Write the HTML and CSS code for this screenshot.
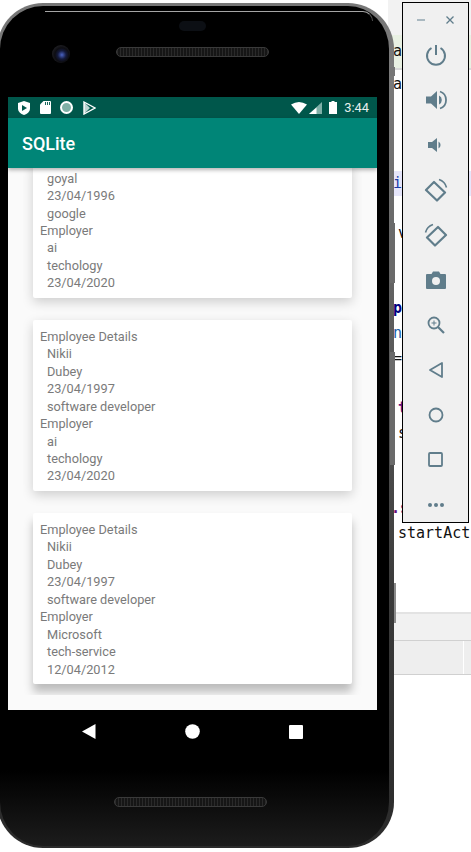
FILE: index.html
```html
<!DOCTYPE html>
<html lang="en">
<head>
  <meta charset="UTF-8" />
  <title>SQLite emulator</title>
  <link rel="stylesheet" href="styles.css">
</head>
<body>
  <div class="desktop">
    <div class="ide">
      <div class="ide-tab">a</div>
      <pre class="ide-code"><span class="l1">ay</span><span class="l2"><i>in</i></span><span class="l3 indent">v</span><span class="l4"><b>p:</b></span><span class="l5"><em>nC</em></span><span class="l6">=</span><span class="l7 indent"><u>t</u></span><span class="l8 indent">s</span><span class="l9"><u>.s</u></span><span class="l10 indent">startAct</span></pre>
      <div class="ide-bottom">
        <div class="ide-row"></div>
        <div class="ide-row ide-row-tabs"><div class="ide-cell"></div></div>
      </div>
    </div>

    <div class="phone">
      <div class="side-btn btn-a"></div>
      <div class="side-btn btn-b"></div>
      <div class="side-btn btn-c"></div>
      <div class="side-btn btn-d"></div>
      <div class="top-bezel">
        <div class="glare"></div>
        <div class="earpiece"></div>
        <div class="camera"></div>
        <div class="speaker"></div>
      </div>

      <div class="screen">
        <div class="status-bar">
          <div class="status-left">
            <svg width="12" height="14" viewBox="0 0 12 14"><path d="M6 0 12 2V7.500C12 10.500 9.500 13 6 14 2.500 13 0 10.500 0 7.500V2Z" fill="#fff"/><path d="M4 4 9 7 4 10Z" fill="#00574b"/></svg>
            <svg width="11" height="13" viewBox="0 0 11 13"><path d="M3.500 0H10Q11 0 11 1V12Q11 13 10 13H1Q0 13 0 12V3.500Z" fill="#fff"/><path d="M5.500 1V4M7.500 1V4M9.500 1V4" stroke="#00574b" stroke-width=".9"/></svg>
            <svg width="13" height="13" viewBox="0 0 13 13"><circle cx="6.500" cy="6.500" r="5.500" fill="#7fb0a6" stroke="#fff" stroke-width="2"/></svg>
            <svg width="13" height="14" viewBox="0 0 13 14"><path d="M1 1 12 7 1 13Z" fill="none" stroke="#fff" stroke-width="1.400"/><path d="M1 1 7 7 1 13Z" fill="#fff" fill-opacity=".75"/></svg>
          </div>
          <div class="status-right">
            <svg class="wifi" width="16" height="12" viewBox="0 0 16 12"><path d="M0 2.500Q8-2.500 16 2.500L8 12Z" fill="#fff"/></svg>
            <svg width="13" height="12" viewBox="0 0 13 12"><path d="M13 0V12H0Z" fill="#7fb0a8"/><path d="M7.500 5.500V12H0Z" fill="#fff"/></svg>
            <svg class="battery" width="8" height="13" viewBox="0 0 8 13"><path d="M2.500 0H5.500V1H8V13H0V1H2.500Z" fill="#fff"/></svg>
            <span class="clock">3:44</span>
          </div>
        </div>
        <div class="app-bar">SQLite</div>

        <div class="content">
          <div class="card-list">
            <div class="card">
              <p class="sub">goyal</p>
              <p class="sub">23/04/1996</p>
              <p class="sub">google</p>
              <p>Employer</p>
              <p class="sub">ai</p>
              <p class="sub">techology</p>
              <p class="sub">23/04/2020</p>
            </div>
            <div class="card">
              <p>Employee Details</p>
              <p class="sub">Nikii</p>
              <p class="sub">Dubey</p>
              <p class="sub">23/04/1997</p>
              <p class="sub">software developer</p>
              <p>Employer</p>
              <p class="sub">ai</p>
              <p class="sub">techology</p>
              <p class="sub">23/04/2020</p>
            </div>
            <div class="card">
              <p>Employee Details</p>
              <p class="sub">Nikii</p>
              <p class="sub">Dubey</p>
              <p class="sub">23/04/1997</p>
              <p class="sub">software developer</p>
              <p>Employer</p>
              <p class="sub">Microsoft</p>
              <p class="sub">tech-service</p>
              <p class="sub">12/04/2012</p>
            </div>
          </div>
        </div>
      </div>

      <div class="bottom-bezel">
        <div class="nav-keys">
          <svg width="14" height="15" viewBox="0 0 14 15"><path d="M13.500 0V15L0 7.500Z" fill="#fff"/></svg>
          <svg width="15" height="15" viewBox="0 0 15 15"><circle cx="7.500" cy="7.500" r="7.300" fill="#fff"/></svg>
          <svg width="14" height="14" viewBox="0 0 14 14"><rect width="14" height="14" rx="1" fill="#fff"/></svg>
        </div>
        <div class="speaker"></div>
      </div>
    </div>

    <div class="toolbar">
      <div class="window-btns">
        <svg width="10" height="10" viewBox="0 0 10 10"><path d="M1 5H9" stroke="#a9b8c0" stroke-width="2"/></svg>
        <svg width="10" height="10" viewBox="0 0 10 10"><path d="M1.500 1.500 8.500 8.500M8.500 1.500 1.500 8.500" stroke="#607d8b" stroke-width="1.300"/></svg>
      </div>
      <div class="tool"><svg width="22" height="22" viewBox="0 0 22 22" fill="none" stroke="#607d8b" stroke-width="2"><path d="M11 1V11"/><path d="M6.500 4A9 9 0 1 0 15.500 4"/></svg></div>
      <div class="tool"><svg width="22" height="22" viewBox="0 0 22 22" fill="#607d8b"><path d="M1 7.500H6L12 2V20L6 14.500H1Z"/><path d="M14 6.500A5 5 0 0 1 14 15.500Z"/><path d="M15 2.500A9 9 0 0 1 15 19.500" fill="none" stroke="#607d8b" stroke-width="1.800"/></svg></div>
      <div class="tool"><svg width="16" height="16" viewBox="0 0 16 16" fill="#607d8b"><path d="M0 5H4L9 1V15L4 11H0Z"/><path d="M10.500 4.500A4 4 0 0 1 10.500 11.500Z"/></svg></div>
      <div class="tool"><svg width="24" height="24" viewBox="0 0 24 24" fill="none" stroke="#607d8b" stroke-width="2.200"><path d="M2 12 10 4 21 14.500 13 22.500Z" stroke-linejoin="round"/><path d="M15 1.500Q21 3.500 22.500 9.500" stroke-width="1.600"/></svg></div>
      <div class="tool"><svg width="24" height="24" viewBox="0 0 24 24" fill="none" stroke="#607d8b" stroke-width="2.200"><path d="M3 14.500 14 4 22 12 11 22.500Z" stroke-linejoin="round"/><path d="M9 1.500Q3 3.500 1.500 9.500" stroke-width="1.600"/></svg></div>
      <div class="tool"><svg width="20" height="18" viewBox="0 0 20 18"><path d="M1 3H5.500L7 .5H13L14.500 3H19Q20 3 20 4V17Q20 18 19 18H1Q0 18 0 17V4Q0 3 1 3Z" fill="#607d8b"/><circle cx="10" cy="10" r="4" fill="#f0f0f0"/></svg></div>
      <div class="tool"><svg width="18" height="18" viewBox="0 0 18 18" fill="none" stroke="#607d8b"><circle cx="7" cy="7" r="5.500" stroke-width="1.800"/><path d="M11 11 17 17" stroke-width="2.200"/><path d="M4.500 7H9.500M7 4.500V9.500" stroke-width="1"/></svg></div>
      <div class="tool"><svg width="14" height="16" viewBox="0 0 14 16" fill="none" stroke="#607d8b" stroke-width="1.800"><path d="M13 1V15L1 8Z" stroke-linejoin="round"/></svg></div>
      <div class="tool"><svg width="16" height="16" viewBox="0 0 16 16" fill="none" stroke="#607d8b" stroke-width="1.800"><circle cx="8" cy="8" r="6.500"/></svg></div>
      <div class="tool"><svg width="15" height="15" viewBox="0 0 15 15" fill="none" stroke="#607d8b" stroke-width="1.800"><rect x="1" y="1" width="13" height="13" rx="1"/></svg></div>
      <div class="tool"><svg width="16" height="4" viewBox="0 0 16 4" fill="#607d8b"><circle cx="2" cy="2" r="2"/><circle cx="8" cy="2" r="2"/><circle cx="14" cy="2" r="2"/></svg></div>
    </div>
  </div>
</body>
</html>
```

FILE: styles.css
```css
body {
  margin: 0;
  font-family: Roboto, "Liberation Sans", sans-serif;
}

.desktop {
  position: relative;
  width: 471px;
  height: 852px;
  overflow: hidden;
  background-color: #fff;
}

/* IDE window behind the emulator */
.ide {
  position: absolute;
  inset: 0 0 0 388px;
  display: flex;
  flex-direction: column;
  padding-top: 35px;
  background-color: #fff;
  background-image: linear-gradient(#f2f2f2, #f2f2f2);
  background-size: 100% 35px;
  background-repeat: no-repeat;
}

.ide-tab {
  height: 35px;
  box-sizing: border-box;
  padding-left: 5px;
  border-bottom: 2px solid #d9d9d9;
  font: 15px/33px "DejaVu Sans Mono", monospace;
  color: #111;
  background-color: #e9f1e3;
}

.ide-code {
  flex: 1;
  min-height: 0;
  display: flex;
  flex-direction: column;
  margin: 0;
  padding: 0 0 0 5px;
  overflow: hidden;
  font: 15px/25px "DejaVu Sans Mono", monospace;
  color: #111;
}

.ide-code span {
  display: block;
  flex-shrink: 0;
  height: 25px;
}

.ide-code .indent { padding-left: 5px; }

.l1 { margin-top: 1.500px; }
.ide-code .l2 { margin: 74.500px 0 0 -5px; padding-left: 5px; background-color: #e6e6fb; }
.l3 { margin-top: 25px; }
.l4 { margin-top: 50px; }
.l7 { margin-top: 25px; }
.l9 { margin-top: 50px; margin-left: -2px; }

.ide-code b { color: #000080; }
.ide-code i { color: #1a3ca8; font-style: normal; }
.ide-code em { color: #1b5ea8; font-style: normal; }
.ide-code u { color: #660e7a; text-decoration: none; font-weight: bold; }

.ide-bottom {
  margin-bottom: 177px;
}

.ide-row {
  height: 28px;
  box-sizing: border-box;
  border-top: 2px solid #e3e3e3;
  background-color: #f1f1f1;
}

.ide-row-tabs {
  height: 35px;
  border-top: 1px solid #d0d0d0;
  border-bottom: 1px solid #d0d0d0;
  background-color: #eee;
}

.ide-cell {
  width: 75px;
  height: 100%;
  border-right: 1px solid #fff;
}

/* phone */
.phone {
  position: absolute;
  left: -3px;
  top: 3px;
  width: 397px;
  height: 845px;
  box-sizing: border-box;
  display: flex;
  flex-direction: column;
  padding: 0 12px 0 8px;
  border-style: solid;
  border-color: transparent;
  border-width: 3px 5px 2px 3px;
  border-radius: 46px;
  background:
    linear-gradient(to bottom, #000 91%, #1c1c1c 100%) padding-box,
    linear-gradient(to bottom, #777 0, #7a7a7a 8%, #666 30%, #3a3a3a 70%, #2b2b2b 100%) border-box;
}

.side-btn {
  position: absolute;
  right: -6px;
  width: 5px;
  background-color: #777;
}

.btn-a { top: 61px; height: 9px; }
.btn-b { top: 217px; height: 60px; background-color: #6a6a6a; }
.btn-c { top: 346px; height: 113px; background-color: #6a6a6a; }
.btn-d { top: 577px; right: -7px; height: 40px; width: 2px; background-color: #8a8a8a; }

.top-bezel {
  height: 91px;
  position: relative;
}

.glare {
  position: absolute;
  left: 37px;
  top: 5px;
  width: 328px;
  height: 10px;
  box-sizing: border-box;
  border-top: 1px solid #a5a5a5;
  border-right: 1px solid #555;
  border-top-right-radius: 14px;
}

.earpiece {
  position: absolute;
  left: 171px;
  top: 15px;
  width: 27px;
  height: 10px;
  border-radius: 5px;
  background-color: #0c0f14;
}

.camera {
  position: absolute;
  left: 44px;
  top: 39px;
  width: 18px;
  height: 18px;
  border-radius: 50%;
  background: radial-gradient(circle at 55% 55%, #4a63c4 0, #141a3c 30%, #0d0d12 50%, #202024 75%);
}

.speaker {
  width: 153px;
  height: 10px;
  box-sizing: border-box;
  border: 1px solid #3a3a3a;
  border-radius: 5px;
  background: repeating-linear-gradient(to right, #2a2a2a 0, #2a2a2a 1px, #161616 1px, #161616 3px);
}

.top-bezel .speaker {
  position: absolute;
  left: 108px;
  top: 41px;
}

.screen {
  height: 613px;
  display: flex;
  flex-direction: column;
  background-color: #fafafa;
}

.status-bar {
  height: 21px;
  display: flex;
  justify-content: space-between;
  align-items: center;
  padding: 0 8px 0 10px;
  background-color: #00574b;
}

.status-left {
  display: flex;
  align-items: center;
  gap: 9.500px;
}

.status-right {
  display: flex;
  align-items: center;
}

.wifi {
  margin-right: 2px;
}

.battery {
  margin: 0 7px;
}

.clock {
  font-size: 12.800px;
  color: #e6f0ee;
}

.app-bar {
  height: 50px;
  display: flex;
  align-items: center;
  padding-left: 14px;
  font-size: 18px;
  font-weight: 500;
  color: #fff;
  background-color: #008577;
  box-shadow: 0 2px 4px rgba(0, 0, 0, .3);
  position: relative;
}

.content {
  flex: 1;
  min-height: 0;
  display: flex;
  justify-content: center;
  padding: 0 15px 15px;
}

.card-list {
  flex: 1;
  display: flex;
  flex-direction: column;
  justify-content: flex-end;
  gap: 22px;
  padding: 0 10px 11px;
  overflow: hidden;
}

.card {
  flex-shrink: 0;
  padding: 8px 7px 6px;
  background-color: #fff;
  border-radius: 2px;
  box-shadow: 0 4px 12px rgba(0, 0, 0, .18);
}

.card:last-child {
  box-shadow: 0 8px 10px rgba(0, 0, 0, .25);
}

.card p {
  margin: 0;
  font-size: 12.750px;
  line-height: 17.450px;
  color: #7a7a7a;
}

.card .sub {
  padding-left: 7px;
}

.bottom-bezel {
  flex: 1;
  display: flex;
  flex-direction: column;
  align-items: center;
  padding-top: 14px;
}

.bottom-bezel .speaker {
  margin-right: 4px;
}

.nav-keys {
  width: 221px;
  display: flex;
  justify-content: space-between;
  align-items: center;
  margin-bottom: 58px;
}

/* emulator side toolbar */
.toolbar {
  position: absolute;
  left: 402px;
  top: 2px;
  width: 67px;
  height: 521px;
  box-sizing: border-box;
  border: 1.500px solid #000;
  background-color: #f0f0f0;
}

.window-btns {
  height: 29px;
  box-sizing: border-box;
  display: flex;
  justify-content: space-between;
  align-items: center;
  padding: 4px 13.500px 0 12.500px;
}

.tool {
  height: 45px;
  display: flex;
  align-items: center;
  justify-content: center;
}
```
